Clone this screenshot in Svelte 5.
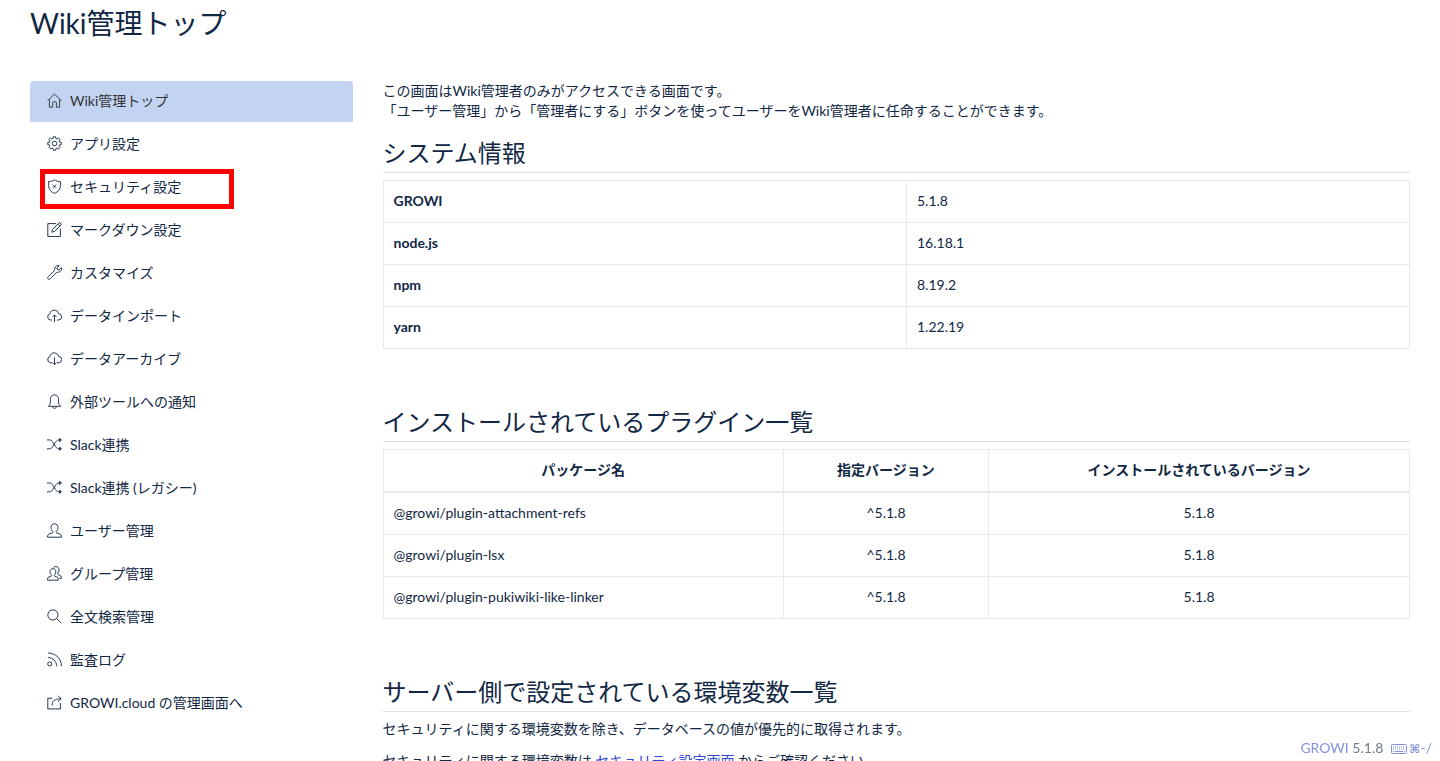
<script lang="ts">
	type MenuItem = { icon: string; label: string; active?: boolean; marked?: boolean }

	const menu: MenuItem[] = [
		{ icon: 'home', label: 'Wiki管理トップ', active: true },
		{ icon: 'settings', label: 'アプリ設定' },
		{ icon: 'shield', label: 'セキュリティ設定', marked: true },
		{ icon: 'note', label: 'マークダウン設定' },
		{ icon: 'wrench', label: 'カスタマイズ' },
		{ icon: 'upload', label: 'データインポート' },
		{ icon: 'download', label: 'データアーカイブ' },
		{ icon: 'bell', label: '外部ツールへの通知' },
		{ icon: 'shuffle', label: 'Slack連携' },
		{ icon: 'shuffle', label: 'Slack連携 (レガシー)' },
		{ icon: 'user', label: 'ユーザー管理' },
		{ icon: 'people', label: 'グループ管理' },
		{ icon: 'search', label: '全文検索管理' },
		{ icon: 'feed', label: '監査ログ' },
		{ icon: 'share', label: 'GROWI.cloud の管理画面へ' }
	]

	// 28x28 line icons
	const icons: Record<string, string[]> = {
		home: ['M1 14.5 14 2l13 12.5', 'M4.5 12v14.5h6V18q0-1.5 1.5-1.5h4q1.5 0 1.5 1.5v8.500h6V12'],
		settings: [
			'M11.8 1.5h4.4l.3 3 2.4 1 2.4-1.9 3.1 3.1-1.9 2.4 1 2.4 3 .3v4.4l-3 .3-1 2.4 1.9 2.4-3.1 3.1-2.4-1.9-2.4 1-.3 3h-4.4l-.3-3-2.4-1-2.4 1.9-3.1-3.1 1.9-2.4-1-2.4-3-.3v-4.4l3-.3 1-2.4-1.9-2.4 3.1-3.1 2.4 1.9 2.4-1z',
			'M14 9.800a4.200 4.200 0 1 0 0 8.400 4.200 4.200 0 0 0 0-8.400z'
		],
		shield: ['M14 1.500c3 2.200 7 3.300 11 3.300v7.700c0 6.500-4 11.500-11 14.500C7 24 3 19 3 12.500V4.800c4 0 8-1.100 11-3.300z', 'M11 10.500l6 6M17 10.500l-6 6'],
		note: ['M17 3H1.500v24H25V12', 'M9 19l1.500-5.500L22.500 1.500q1.500-.8 3 .8t.6 3L14.500 17.500z', 'M20.500 4l3.500 3.500'],
		wrench: ['M23 1.500c-4-1.500-8 1-8.500 4.500-.3 2 .2 3.500-.5 4.300L2 22c-1.500 1.500-1 3 0 4s2.800 1.200 4-.2L17.500 14c1-.8 2.500-.2 4.500-.6 3.800-.8 6-4.700 4.700-8.600L22.500 9 19 8.500 18.500 5.500z'],
		upload: ['M9.500 22.500H7a6 6 0 0 1-1.500-11.700C5.800 6.500 9.500 4 13.500 4s7.300 2.500 8 6.500a6 6 0 0 1-.5 12h-2.500', 'M14 26V13M10.500 16.500 14 13l3.500 3.500'],
		download: ['M9.500 22H7A6 6 0 0 1 5.500 10.300C5.800 6 9.500 3.500 13.500 3.500s7.300 2.500 8 6.500a6 6 0 0 1-.5 12h-2.500', 'M14 12v13M10.500 22l3.500 3.500 3.500-3.500'],
		bell: ['M2.500 23c2.500-2.500 4-5 4-8.500V10c0-5 3-8.500 7.500-8.500s7.500 3.500 7.500 8.500v4.500c0 3.500 1.500 6 4 8.500z', 'M10.500 23.500c.5 4.500 6.500 4.500 7 0'],
		shuffle: [
			'M0 5.500h5c3 0 4.500 2 6 4.500l5 7.500c1.500 2.500 3 4.500 6 4.500h4',
			'M0 22h5c3 0 4.500-2 6-4.500l5-7.500c1.500-2.500 3-4.500 6-4.500h4',
			'M23.500 2.500 27 5.500l-3.500 3zM23.500 19l3.500 3-3.500 3z'
		],
		user: ['M14 1.500c-4 0-6.500 2.800-6.500 6.500 0 3.500 1.200 5.500 3 7.500.8 1.200.5 2.700-.8 3.200L4 20.500C2 21.300 1 23 1 26.500h26c0-3.500-1-5.200-3-6l-5.700-1.800c-1.300-.5-1.600-2-.8-3.200 1.800-2 3-4 3-7.500 0-3.700-2.500-6.500-6.500-6.500z'],
		people: [
			'M11 5c-3.500 0-5.500 2.300-5.500 5.500 0 2.800 1 4.500 2.500 6.200.7 1 .4 2-.6 2.500L3.500 20.500C1.500 21.300 1 23 1 26.500h20c0-3.500-.5-5.200-2.500-6l-3.900-1.300c-1-.5-1.300-1.500-.6-2.500 1.500-1.700 2.500-3.400 2.500-6.200C16.500 7.300 14.500 5 11 5z',
			'M12 3c1-1.300 2.500-2 4.500-2C20 1 22.500 3.500 22.500 7c0 2.800-1 4.500-2.500 6.500-.7 1-.4 2 .6 2.500l3.400 1.300c2 .8 3 2.700 3 5.700h-4'
		],
		search: ['M11 1.500a9.500 9.500 0 1 0 0 19 9.500 9.500 0 0 0 0-19z', 'M18 18l9 8.500'],
		feed: ['M5 18.500a3.800 3.800 0 1 0 0 7.600 3.800 3.800 0 0 0 0-7.600z', 'M2 10.500c9 0 16 7 16 16', 'M2 2c14 0 25 10.500 25 24.500'],
		share: ['M10 6H1.500v20H25V15', 'M9.500 19.500c0-8 4.500-12.500 16.500-12.500', 'M20.500 1.500 26.500 7l-6 5.500']
	}

	const system = [
		['GROWI', '5.1.8'],
		['node.js', '16.18.1'],
		['npm', '8.19.2'],
		['yarn', '1.22.19']
	]

	const plugins = [
		{ name: '@growi/plugin-attachment-refs', required: '^5.1.8', installed: '5.1.8' },
		{ name: '@growi/plugin-lsx', required: '^5.1.8', installed: '5.1.8' },
		{ name: '@growi/plugin-pukiwiki-like-linker', required: '^5.1.8', installed: '5.1.8' }
	]
</script>

<svelte:head>
	<title>Wiki管理トップ</title>
</svelte:head>

<div class="page" lang="ja">
	<header>
		<h1>Wiki管理トップ</h1>
	</header>

	<div class="row">
		<nav>
			{#each menu as item}
				<a href="#{item.icon}" class:active={item.active} class:marked={item.marked}>
					<svg class="icon" viewBox="0 0 28 28" aria-hidden="true">
						{#each icons[item.icon] as d}<path {d} />{/each}
					</svg>
					<span>{item.label}</span>
				</a>
			{/each}
		</nav>

		<main>
			<p class="intro">
				この画面はWiki管理者のみがアクセスできる画面です。<br />
				「ユーザー管理」から「管理者にする」ボタンを使ってユーザーをWiki管理者に任命することができます。
			</p>

			<section>
				<h2>システム情報</h2>
				<table class="system">
					<tbody>
						{#each system as [name, version]}
							<tr>
								<th scope="row">{name}</th>
								<td>{version}</td>
							</tr>
						{/each}
					</tbody>
				</table>
			</section>

			<section>
				<h2>インストールされているプラグイン一覧</h2>
				<table class="plugins">
					<thead>
						<tr>
							<th>パッケージ名</th>
							<th>指定バージョン</th>
							<th>インストールされているバージョン</th>
						</tr>
					</thead>
					<tbody>
						{#each plugins as p}
							<tr>
								<td>{p.name}</td>
								<td class="center">{p.required}</td>
								<td class="center">{p.installed}</td>
							</tr>
						{/each}
					</tbody>
				</table>
			</section>

			<section>
				<h2>サーバー側で設定されている環境変数一覧</h2>
				<p>セキュリティに関する環境変数を除き、データベースの値が優先的に取得されます。</p>
				<p>セキュリティに関する環境変数は <a href="#security">セキュリティ設定画面</a> からご確認ください。</p>
			</section>
		</main>
	</div>

	<footer>
		<span><a href="#growi">GROWI</a> 5.1.8</span>
		<a href="#shortcuts" class="keys" aria-label="ショートカット">
			<svg viewBox="0 0 16 12" aria-hidden="true">
				<rect x="0.500" y="1.500" width="15" height="9" rx="1" />
				<path d="M2 4h12M2 6h12" stroke-dasharray="1 1" />
				<path d="M2 8.500h1M4 8.500h8M13 8.500h1" />
			</svg>
			<span><span class="cmd">⌘</span>-/</span>
		</a>
	</footer>
</div>

<style>
	:global(body) { margin: 0; background: #fff; }

	.page {
		font-family: Lato, "Noto Sans CJK JP", sans-serif;
		font-size: 14px; line-height: 20px; color: #112744;
	}

	header { padding: 5px 30px 0; }
	h1 { margin: 0; font-size: 28px; line-height: 36px; font-weight: 400; }

	.row { display: grid; grid-template-columns: minmax(0, 1fr) minmax(0, 3fr); padding: 0 15px; margin-top: 40px; }
	nav, main { padding: 0 15px; }

	nav { display: flex; flex-direction: column; gap: 2px; }
	nav a {
		position: relative; display: flex; align-items: center; gap: 8px;
		height: 41px; padding: 0 17px 2px; box-sizing: border-box;
		border-radius: 4px 4px 0 0; color: inherit; text-decoration: none;
	}
	nav a.active { background: #c2d4f2; color: #333; }
	nav a.marked::after {
		content: ''; position: absolute; left: 10px; top: 2px;
		width: 194px; height: 40px; box-sizing: border-box; border: 5px solid #f00;
	}

	.icon { width: 15px; height: 15px; flex: none; fill: none; stroke: currentColor; stroke-width: 1.7; }

	p { margin: 0 0 12px; }
	.intro { margin-bottom: 17px; }

	section { margin-bottom: 58px; }
	h2 {
		margin: 0 0 7px; padding-bottom: 4px; border-bottom: 1px solid #dcdfe3;
		font-size: 24px; line-height: 30px; font-weight: 400;
	}

	table { width: 100%; border-collapse: collapse; table-layout: fixed; }
	th, td { height: 40px; padding: 0 10px 1px; border: 1px solid #e7e9ec; }
	th { font-weight: 700; }
	.system th { width: 51%; height: 42px; text-align: left; box-sizing: border-box; }
	.plugins th { height: 42px; border-bottom-width: 2px; box-sizing: border-box; }
	.plugins th:nth-child(1) { width: 39%; }
	.plugins th:nth-child(2) { width: 20%; }
	.center { text-align: center; }

	main a { color: #2f4ad0; text-decoration: none; }

	footer {
		position: fixed; right: 8px; bottom: 2px;
		display: flex; gap: 8px; color: #707d8f;
	}
	footer a { color: #8292e0; text-decoration: none; }
	.keys { display: flex; align-items: center; gap: 2px; }
	.keys svg { width: 16px; height: 12px; fill: none; stroke: currentColor; stroke-width: 1; }
	.cmd { font-family: "DejaVu Sans", sans-serif; font-size: 12px; font-weight: 700; }
</style>
